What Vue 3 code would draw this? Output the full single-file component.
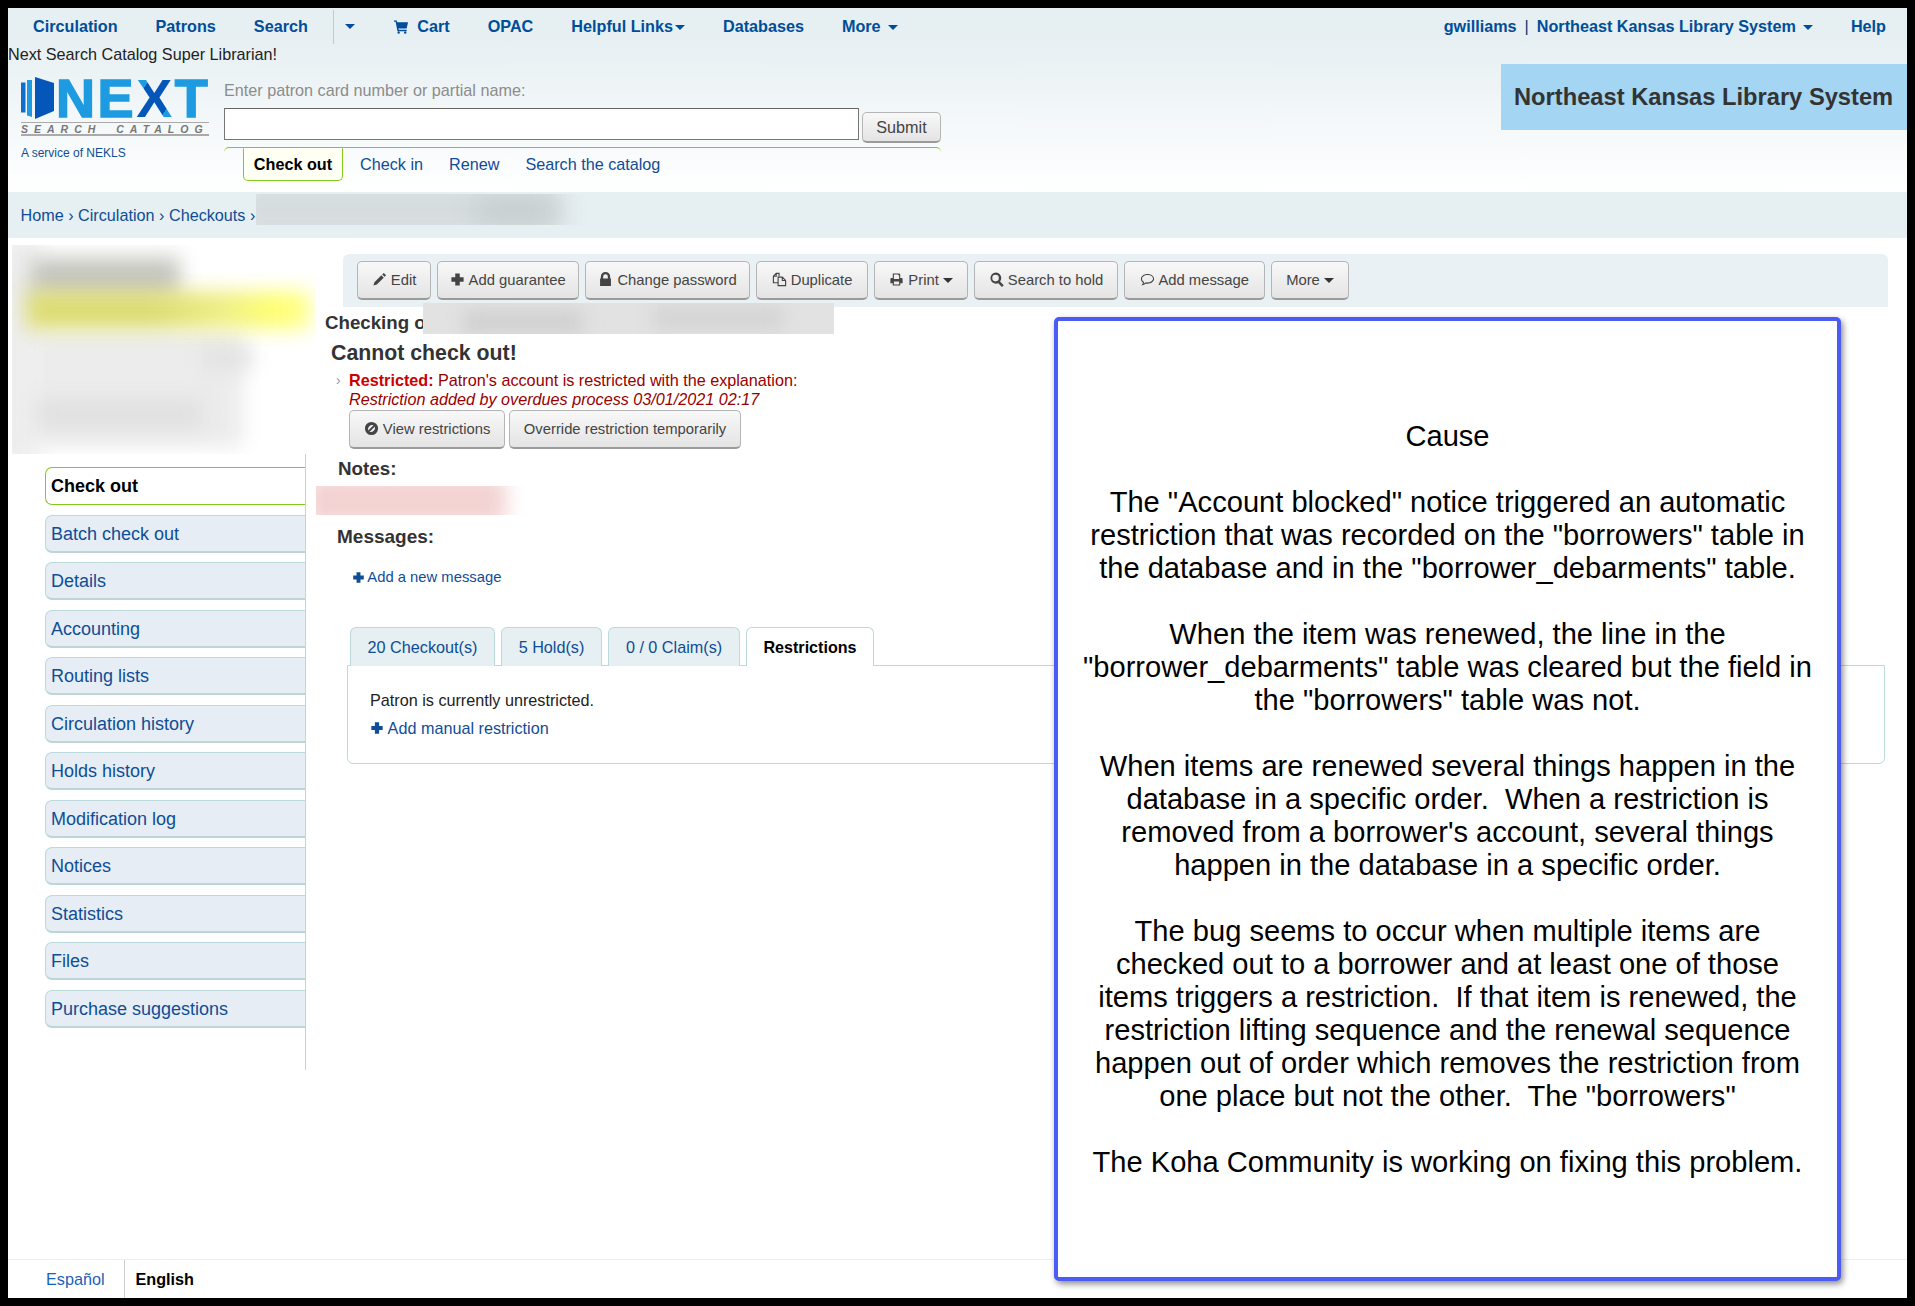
<template>
  <div class="page">
    <header class="head">
      <nav class="topnav">
        <div class="nav-left">
          <a>Circulation</a>
          <a>Patrons</a>
          <a>Search</a>
          <span class="nav-sep"><i class="caret"></i></span>
          <a class="cart">
            <svg class="ico" viewBox="0 0 16 16"><path :d="icons.cart" /></svg>
            Cart
          </a>
          <a>OPAC</a>
          <a>Helpful Links<i class="caret tight"></i></a>
          <a>Databases</a>
          <a>More<i class="caret"></i></a>
        </div>
        <div class="nav-right">
          <a>gwilliams</a>
          <span class="pipe">|</span>
          <a>Northeast Kansas Library System<i class="caret"></i></a>
          <a class="help">Help</a>
        </div>
      </nav>
      <div class="welcome">Next Search Catalog Super Librarian!</div>

      <div class="brand-row">
        <div class="brand">
          <div class="logo">
            <svg class="logo-mark" viewBox="0 0 36 42">
              <path d="M1 5.500h4.500v30H1z" fill="#0f6fcc" />
              <path d="M7 3h5v37l-5-1.500z" fill="#1e9be0" />
              <path d="M15 0l19 6v28l-19 8z" fill="#0457b8" />
            </svg>
            <span class="logo-word">NE<b>X</b>T</span>
          </div>
          <div class="logo-sub">SEARCH CATALOG</div>
          <div class="service">A service of NEKLS</div>
        </div>

        <div class="search">
          <label class="search-label">Enter patron card number or partial name:</label>
          <div class="search-line">
            <input class="search-input" type="text" />
            <button class="btn submit">Submit</button>
          </div>
          <div class="search-tabs">
            <span class="search-tab">Check out</span>
            <a>Check in</a>
            <a>Renew</a>
            <a>Search the catalog</a>
          </div>
        </div>

        <div class="branch">Northeast Kansas Library System</div>
      </div>
    </header>

    <div class="crumbs">
      <a>Home</a> › <a>Circulation</a> › <a>Checkouts</a> ›
      <div class="smudge crumb-smudge"><i></i><i></i></div>
    </div>

    <div class="body">
      <aside class="side">
        <div class="patron">
          <i class="p-base"></i>
          <i class="p-lines"></i>
          <i class="p-patch"></i>
          <i class="p-patch2"></i>
          <i class="p-name"></i>
          <i class="p-flag"></i>
        </div>
        <ul class="menu">
          <li v-for="(m, i) in menu" :key="m" :class="{ on: i === 0 }">{{ m }}</li>
        </ul>
      </aside>

      <main class="main">
        <div class="toolbar">
          <button v-for="b in toolbar" :key="b.label" class="btn" :style="{ width: b.w + 'px' }">
            <svg v-if="b.icon" class="ico" :class="{ line: b.icon === 'copy' }" viewBox="0 0 16 16"><path :d="icons[b.icon]" /></svg>
            {{ b.label }}<i v-if="b.caret" class="caret dark"></i>
          </button>
        </div>

        <div class="checking">
          Checking o
          <div class="smudge check-smudge"><i></i><i></i></div>
        </div>
        <h3 class="cannot">Cannot check out!</h3>
        <div class="alert">
          <span class="bullet">›</span>
          <div>
            <b>Restricted:</b> Patron's account is restricted with the explanation:<br />
            <em>Restriction added by overdues process 03/01/2021 02:17</em>
          </div>
        </div>
        <div class="alert-btns">
          <button class="btn view">
            <svg class="ico" viewBox="0 0 16 16"><path :d="icons.ban" /></svg>
            View restrictions
          </button>
          <button class="btn override">Override restriction temporarily</button>
        </div>

        <h4 class="notes">Notes:</h4>
        <div class="note-smudge"><i></i></div>
        <h4 class="messages">Messages:</h4>
        <a class="addmsg">
          <svg class="ico" viewBox="0 0 16 16"><path :d="icons.plus" /></svg>
          Add a new message
        </a>

        <div class="tabs">
          <span class="tab" style="width: 145px">20 Checkout(s)</span>
          <span class="tab" style="width: 101px">5 Hold(s)</span>
          <span class="tab" style="width: 132px">0 / 0 Claim(s)</span>
          <span class="tab active" style="width: 128px">Restrictions</span>
        </div>
        <div class="panel">
          <p>Patron is currently unrestricted.</p>
          <a>
            <svg class="ico" viewBox="0 0 16 16"><path :d="icons.plus" /></svg>
            Add manual restriction
          </a>
        </div>
      </main>
    </div>

    <footer class="foot">
      <a class="lang">Español</a>
      <b class="lang cur">English</b>
    </footer>

    <div class="callout">
      <div class="callout-text">{{ cause }}</div>
    </div>
  </div>
</template>

<script setup>
const icons = {
  plus: 'M5.600 1.500h4.800v4.100h4.100v4.800h-4.100v4.100H5.600v-4.100H1.500V5.600h4.100z',
  edit: 'M12.500 1l2.500 2.500-1.600 1.600-2.500-2.500zM10 3.500L12.500 6l-7.400 7.400-3.600 1.100 1.100-3.600z',
  lock: 'M3 7V5a5 5 0 0110 0v2h.8v8H2.200V7zM5.500 7h5V5a2.500 2.500 0 00-5 0z',
  copy: 'M7.500 4.500V1.500H4.500L1.500 4.500V11.500H6.500M1.500 4.500H4.500V1.500M6.500 5.500H11L14.500 9V14.500H6.500ZM11 5.500V9H14.500',
  print: 'M4 1.500h7l1 1v4h1.500a1 1 0 011 1V12H12v2.500H4V12H1.500V7.500a1 1 0 011-1H4zM5.200 2.700V7.500h5.600V3.500h-1v-.800zM5.200 10v3.300h5.600V10z',
  search: 'M7 .5a6 6 0 014.800 9.600l3.900 3.900-1.900 1.900-3.900-3.900A6 6 0 117 .5zm0 2.500a3.500 3.500 0 100 7 3.500 3.500 0 000-7z',
  comment: 'M8 2c3.900 0 7 2.300 7 5.300s-3.100 5.300-7 5.300c-.700 0-1.300-.100-1.900-.200C5 13.300 3.500 14 1.500 14.200c.800-.800 1.400-1.700 1.600-2.800C1.800 10.400 1 9 1 7.300 1 4.300 4.100 2 8 2zm0 1.100c-3.300 0-5.900 1.900-5.900 4.200 0 1.500 1 2.700 2.200 3.400-.100.700-.300 1.200-.600 1.800 1-.300 1.900-.900 2.500-1.500.600.100 1.200.200 1.800.200 3.300 0 5.900-1.900 5.900-4.200S11.300 3.100 8 3.100z',
  ban: 'M8 1a7 7 0 110 14A7 7 0 018 1zM4.400 10.200l5.800-5.800A4.700 4.700 0 004.400 10.200zM5.800 11.600a4.700 4.700 0 005.800-5.800z',
  cart: 'M.5 1.500h3l.4 2h11.600l-1.500 6.500H5.200l.3 1.500h8.500V13H4.200L2.300 3H.5zM5.500 13.200a1.300 1.300 0 110 2.600 1.300 1.300 0 010-2.600zM12.500 13.200a1.300 1.300 0 110 2.600 1.300 1.300 0 010-2.600z'
}

const menu = [
  'Check out', 'Batch check out', 'Details', 'Accounting', 'Routing lists',
  'Circulation history', 'Holds history', 'Modification log', 'Notices',
  'Statistics', 'Files', 'Purchase suggestions'
]

const toolbar = [
  { label: 'Edit', icon: 'edit', w: 74 },
  { label: 'Add guarantee', icon: 'plus', w: 142 },
  { label: 'Change password', icon: 'lock', w: 165 },
  { label: 'Duplicate', icon: 'copy', w: 112 },
  { label: 'Print', icon: 'print', caret: true, w: 94 },
  { label: 'Search to hold', icon: 'search', w: 144 },
  { label: 'Add message', icon: 'comment', w: 141 },
  { label: 'More', caret: true, w: 78 }
]

const cause = [
  'Cause',
  '',
  'The "Account blocked" notice triggered an automatic',
  'restriction that was recorded on the "borrowers" table in',
  'the database and in the "borrower_debarments" table.',
  '',
  'When the item was renewed, the line in the',
  '"borrower_debarments" table was cleared but the field in',
  'the "borrowers" table was not.',
  '',
  'When items are renewed several things happen in the',
  'database in a specific order.  When a restriction is',
  'removed from a borrower\'s account, several things',
  'happen in the database in a specific order.',
  '',
  'The bug seems to occur when multiple items are',
  'checked out to a borrower and at least one of those',
  'items triggers a restriction.  If that item is renewed, the',
  'restriction lifting sequence and the renewal sequence',
  'happen out of order which removes the restriction from',
  'one place but not the other.  The "borrowers"',
  '',
  'The Koha Community is working on fixing this problem.'
].join('\n')
</script>

<style>
html, body { margin: 0; background: #000; }
</style>

<style scoped>
.page {
  position: relative;
  box-sizing: border-box;
  width: 1915px;
  height: 1306px;
  border: 8px solid #000;
  background: #fff;
  display: flex;
  flex-direction: column;
  overflow: hidden;
  font-family: "Liberation Sans", Arial, sans-serif;
  font-size: 16.200px;
  color: #222;
}
a { color: #0f4d97; text-decoration: none; }
h3, h4, p, ul { margin: 0; padding: 0; }
.ico { width: 15px; height: 15px; fill: currentColor; fill-rule: evenodd; vertical-align: -2px; }
.ico.line { fill: none; stroke: currentColor; stroke-width: 1.200; }
.caret {
  display: inline-block;
  margin-left: 7px;
  border: 5px solid transparent;
  border-top-color: #004d99;
  border-bottom: 0;
  vertical-align: 2px;
}
.caret.tight { margin-left: 2px; }
.caret.dark { border-top-color: #333; margin-left: 4px; }

/* header */
.head {
  height: 184px;
  background: linear-gradient(#e6eff2 0%, #e6eff2 15%, #ffffff 100%);
}
.topnav {
  height: 37px;
  display: flex;
  justify-content: space-between;
  align-items: center;
  font-weight: bold;
}
.topnav a { color: #004d99; white-space: nowrap; }
.nav-left { display: flex; align-items: center; padding-left: 25px; gap: 38px; }
.nav-sep {
  margin-left: -13px;
  height: 34px;
  border-left: 1px solid #b5d0d4;
  padding-left: 11px;
  display: flex;
  align-items: center;
}
.nav-sep .caret { margin-left: 0; }
.cart .ico { margin-right: 4px; width: 16px; height: 15px; vertical-align: -2px; }
.nav-right { display: flex; align-items: center; padding-right: 21px; }
.pipe { color: #003c78; font-weight: normal; margin: 0 8px; }
.help { margin-left: 38px; }
.welcome { height: 19px; line-height: 18px; color: #222; }

.brand-row { display: flex; align-items: flex-start; }
.brand { width: 216px; padding: 13px 0 0 12px; box-sizing: border-box; flex: none; }
.logo { display: flex; align-items: center; height: 42px; width: 190px; }
.logo-mark { width: 36px; height: 42px; flex: none; }
.logo-word {
  margin-left: 0;
  font-size: 54px;
  font-weight: bold;
  line-height: 42px;
  letter-spacing: 2.600px;
  color: #1e9be0;
  -webkit-text-stroke: 1.500px #1e9be0;
  white-space: nowrap;
}
.logo-word b {
  -webkit-text-stroke: 0;
  background: linear-gradient(125deg, #1e9be0 0 27%, #0457b8 27% 73%, #1e9be0 73% 100%);
  -webkit-background-clip: text;
  background-clip: text;
  color: transparent;
}
.logo-sub {
  box-sizing: border-box;
  width: 188px;
  height: 14px;
  margin: 3px 0 0 1px;
  border-top: 1px solid #aaa;
  border-bottom: 2px solid #aaa;
  font-size: 10.500px;
  font-weight: bold;
  font-style: italic;
  letter-spacing: 6px;
  word-spacing: 6px;
  line-height: 12px;
  color: #777;
  white-space: nowrap;
  overflow: hidden;
}
.service { margin: 10px 0 0 1px; font-size: 12px; color: #0f4d97; }

.search { width: 717px; flex: none; }
.search-label { display: block; margin-top: 18px; line-height: 16px; color: #8c8c8c; }
.search-line { display: flex; align-items: flex-start; margin-top: 10px; gap: 3px; height: 35px; }
.search-input {
  box-sizing: border-box;
  width: 635px;
  height: 32px;
  border: 1px solid #767676;
  border-top-color: #666;
  background: #fff;
  padding: 0;
}
.search-tabs {
  position: relative;
  margin-top: 4px;
  height: 33px;
  border-top: 1px solid #84c91c;
  border-radius: 5px 5px 0 0;
  display: flex;
  align-items: center;
  gap: 26px;
  padding-left: 19px;
}
.search-tab {
  box-sizing: border-box;
  width: 100px;
  height: 33px;
  margin-top: -1px;
  margin-right: -9px;
  background: #fffff4;
  border: 1px solid #84c91c;
  border-top-color: #fffff4;
  border-radius: 0 0 5px 5px;
  font-weight: bold;
  color: #000;
  line-height: 30px;
  text-align: center;
}
.branch {
  margin-left: auto;
  width: 406px;
  height: 66px;
  background: #a4d5f2;
  color: #333;
  font-size: 23.700px;
  font-weight: bold;
  line-height: 66px;
  padding-left: 13px;
  box-sizing: border-box;
  white-space: nowrap;
}

.btn {
  box-sizing: border-box;
  height: 39px;
  padding: 0;
  background: linear-gradient(#f8f8f8, #e4e4e4);
  border: 1px solid #b5b5b5;
  border-bottom: 2px solid #9a9a9a;
  border-radius: 5px;
  color: #444;
  font-family: inherit;
  font-size: 14.800px;
  white-space: nowrap;
}
.btn.submit { width: 79px; height: 31px; margin-top: 4px; font-size: 16.200px; }

/* breadcrumbs */
.crumbs {
  position: relative;
  height: 46px;
  flex: none;
  background: #e6eff2;
  line-height: 46px;
  padding-left: 12.500px;
  color: #0f4d97;
}
.smudge { position: absolute; overflow: hidden; }
.smudge i { position: absolute; display: block; filter: blur(9px); }
.crumb-smudge { left: 248px; top: 2px; width: 340px; height: 31px; }
.crumb-smudge i { left: -20px; top: -12px; width: 325px; height: 56px; background: #d6dcde; filter: blur(12px); }
.crumb-smudge i + i { left: 220px; top: 4px; width: 80px; height: 26px; background: #c6cdcf; }

/* body */
.body { flex: 1; display: flex; min-height: 0; }
.side { width: 308px; flex: none; padding-top: 7px; box-sizing: border-box; }
.patron { position: relative; height: 209px; width: 304px; margin-left: 4px; overflow: hidden; }
.patron i { position: absolute; display: block; filter: blur(10px); }
.p-base { left: -14px; top: -10px; width: 40px; height: 230px; background: #eeeeee; }
.p-lines { left: 16px; top: 86px; width: 215px; height: 116px; background: #ececec; }
.p-patch { left: 25px; top: 155px; width: 165px; height: 28px; background: #e0e0e0; }
.p-patch2 { left: 190px; top: 102px; width: 50px; height: 22px; background: #e2e2e2; }
.p-name { left: 18px; top: 12px; width: 150px; height: 42px; background: #c6c6c0; }
.p-flag {
  left: 14px;
  top: 46px;
  width: 285px;
  height: 38px;
  background: linear-gradient(90deg, #dcdc72 0, #dcdc72 45%, #f0f084 70%, #ffff70 88%, #ffff90 100%);
}

.menu {
  list-style: none;
  margin-left: 37px;
  width: 261px;
  box-sizing: border-box;
  height: 616px;
  border-right: 1px solid #b9d8da;
  padding-top: 13px;
}
.menu li {
  box-sizing: border-box;
  height: 38px;
  margin-bottom: 9.500px;
  padding-left: 5px;
  font-size: 18px;
  line-height: 36px;
  background: #e6edf4;
  border: 1px solid #bcdadb;
  border-right: 0;
  border-bottom: 2px solid #bcd6d8;
  border-radius: 7px 0 0 7px;
  color: #0f4d97;
}
.menu li.on {
  background: #fff;
  border: 1px solid #84c91c;
  border-right: 0;
  color: #000;
  font-weight: bold;
}

.main { flex: 1; min-width: 0; }
.toolbar {
  box-sizing: border-box;
  width: 1545px;
  height: 53px;
  margin: 16px 0 0 27px;
  padding: 7px 0 0 14px;
  background: #e9f1f4;
  border-radius: 6px 6px 0 0;
  display: flex;
  gap: 6px;
  align-items: flex-start;
}
.checking {
  position: relative;
  margin: 4px 0 0 9px;
  line-height: 24px;
  font-size: 18.700px;
  font-weight: bold;
  color: #333;
}
.check-smudge { left: 98px; top: -8px; width: 411px; height: 31px; background: #e2e2e2; }
.check-smudge i { left: 40px; top: 8px; width: 120px; height: 22px; background: #cfcfcf; }
.check-smudge i + i { left: 230px; top: 4px; width: 130px; background: #d3d3d3; }
.cannot {
  margin: 4px 0 0 15px;
  line-height: 28px;
  font-size: 21.300px;
  color: #333;
}
.alert { display: flex; margin: 4px 0 0 20px; line-height: 19px; color: #990000; }
.alert b { color: #c00; }
.bullet { width: 13px; color: #999; font-size: 14px; flex: none; }
.alert-btns { display: flex; gap: 4px; margin: 1px 0 0 33px; }
.view { width: 156px; }
.override { width: 232px; }
.notes, .messages { margin-left: 22px; line-height: 22px; color: #333; }
.notes { margin-top: 9px; font-size: 18.800px; }
.note-smudge { position: relative; height: 29px; width: 209px; margin-top: 6px; overflow: hidden; }
.note-smudge i {
  position: absolute; left: -10px; top: -10px; width: 200px; height: 50px;
  display: block; background: #f3d2d2; filter: blur(10px);
}
.messages { margin-top: 11px; font-size: 19px; margin-left: 21px; }
.addmsg { display: block; margin: 19px 0 0 36px; line-height: 20px; font-size: 14.800px; }
.addmsg .ico { width: 13px; height: 13px; margin-right: -1px; }
.tabs { display: flex; gap: 6px; margin: 40px 0 0 34px; height: 38px; position: relative; z-index: 1; }
.tab {
  box-sizing: border-box;
  height: 39px;
  background: #e6eff2;
  border: 1px solid #bcdadb;
  border-bottom: 0;
  border-radius: 6px 6px 0 0;
  text-align: center;
  line-height: 38px;
  color: #0f4d97;
}
.tab.active { background: #fff; color: #000; font-weight: bold; font-size: 16.100px; }
.panel {
  box-sizing: border-box;
  width: 1538px;
  height: 99px;
  margin-left: 31px;
  border: 1px solid #bcdadb;
  border-radius: 0 0 6px 6px;
  padding: 24px 0 0 22px;
}
.panel p { line-height: 20px; color: #222; }
.panel a { display: block; margin-top: 8px; line-height: 20px; }
.panel .ico { width: 14px; height: 14px; vertical-align: -1px; }

.foot {
  flex: none;
  height: 39px;
  border-top: 1px solid #eee;
  box-sizing: border-box;
  display: flex;
  align-items: stretch;
  line-height: 38px;
}
.lang { padding: 0 19px 0 38px; color: #1a62b8; }
.lang.cur { border-left: 1px solid #ccc; padding: 0 0 0 11px; color: #000; }

/* annotation over the page */
.callout {
  position: absolute;
  left: 1046px;
  top: 309px;
  width: 787px;
  height: 964px;
  box-sizing: border-box;
  border: 4px solid #4a5cf5;
  border-radius: 5px;
  background: #fff;
  box-shadow: 2px 3px 6px rgba(0, 0, 0, .45);
  display: flex;
  align-items: center;
  justify-content: center;
}
.callout-text {
  white-space: pre;
  text-align: center;
  font-size: 29.100px;
  line-height: 33px;
  color: #000;
}
</style>
